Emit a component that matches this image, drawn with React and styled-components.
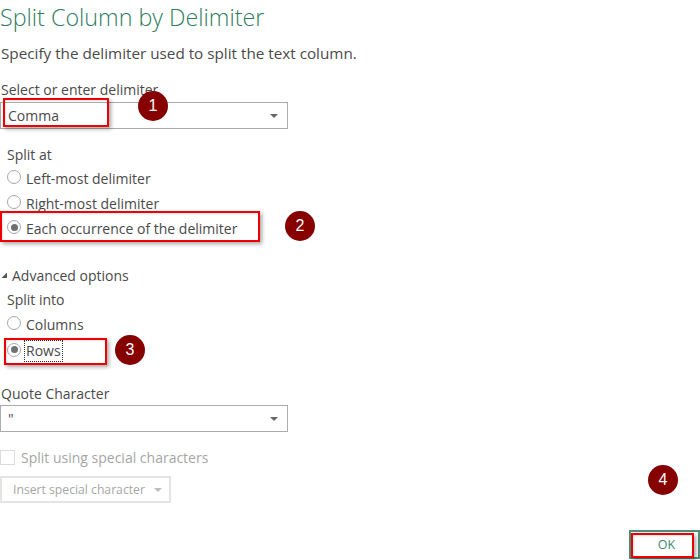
import React from "react";
import styled, { createGlobalStyle } from "styled-components";

const Global = createGlobalStyle`
  html, body { margin: 0; padding: 0; background: #fff; }
  body { width: 700px; height: 560px; overflow: hidden; }
`;

const Dialog = styled.div`
  position: relative;
  width: 700px;
  height: 560px;
  overflow: hidden;
  background: #fff;
  font-family: "Open Sans", "Noto Sans", sans-serif;
  font-size: 14px;
  color: #4a4a4a;
  display: flex;
  flex-direction: column;
`;

const Title = styled.h1`
  margin: 0;
  height: 36px;
  line-height: 35px;
  font-size: 23.3px;
  font-weight: 300;
  color: #2f7d62;
  white-space: nowrap;
`;

const Description = styled.p`
  margin: 7px 0 0;
  height: 20px;
  line-height: 20px;
  font-size: 15.25px;
  color: #4a4a4a;
  padding-left: 1px;
  white-space: nowrap;
`;

const FieldLabel = styled.div`
  height: 20px;
  line-height: 20px;
  margin-top: ${(p) => p.$top || 0}px;
  padding-left: ${(p) => p.$indent || 1}px;
  white-space: nowrap;
`;

const Select = styled.div`
  box-sizing: border-box;
  width: 288px;
  height: 27px;
  margin-top: ${(p) => p.$top || 0}px;
  border: 1px solid #ababab;
  display: flex;
  align-items: center;
  justify-content: space-between;
  padding: 0 9px 0 7px;
`;

const Caret = styled.span`
  width: 0;
  height: 0;
  border-left: 4px solid transparent;
  border-right: 4px solid transparent;
  border-top: 4px solid ${(p) => p.$color || "#666"};
  margin-top: 1px;
`;

const RadioRow = styled.label`
  display: flex;
  align-items: center;
  gap: 5px;
  height: ${(p) => p.$h || 25}px;
  padding-left: 7px;
  white-space: nowrap;
`;

const Radio = styled.span`
  box-sizing: border-box;
  width: 14px;
  height: 14px;
  margin-top: -3px;
  border-radius: 50%;
  border: 1px solid #a8a8a8;
  background: #fff;
  display: flex;
  align-items: center;
  justify-content: center;
  flex: none;
  &::after {
    content: "";
    width: 7px;
    height: 7px;
    border-radius: 50%;
    background: ${(p) => (p.$checked ? "#707070" : "transparent")};
  }
`;

const Focused = styled.span`
  outline: 1px dotted #333;
  padding: 0 1px;
  margin-left: -1px;
  height: 20px;
  line-height: 20px;
`;

const Disclosure = styled.div`
  display: flex;
  align-items: center;
  gap: 4px;
  height: 20px;
  margin-top: 24px;
`;

const Triangle = styled.svg`
  width: 8px;
  height: 8px;
  flex: none;
`;

const CheckRow = styled.div`
  display: flex;
  align-items: center;
  gap: 6px;
  height: 20px;
  margin-top: 15px;
  color: #a6a6a6;
`;

const CheckBox = styled.span`
  box-sizing: border-box;
  width: 15px;
  height: 15px;
  border: 1px solid #dcdcdc;
  flex: none;
`;

const InsertButton = styled.div`
  box-sizing: border-box;
  width: 171px;
  height: 27px;
  margin-top: 9px;
  border: 2px solid #e4e4e4;
  display: flex;
  align-items: center;
  gap: 9px;
  padding-left: 11px;
  font-size: 12.2px;
  color: #a6a6a6;
  white-space: nowrap;
`;

const Footer = styled.div`
  display: flex;
  justify-content: flex-end;
  margin-top: 27px;
`;

const OkButton = styled.button`
  box-sizing: border-box;
  width: 71px;
  height: 29px;
  border: 2px solid #4d8f78;
  background: #fff;
  padding: 0 0 0 4px;
  font: inherit;
  font-size: 12.5px;
  color: #3d8a72;
`;

const Highlight = styled.div`
  position: absolute;
  box-sizing: border-box;
  left: ${(p) => p.$x}px;
  top: ${(p) => p.$y}px;
  width: ${(p) => p.$w}px;
  height: ${(p) => p.$h}px;
  border: 2px solid #ee0000;
  box-shadow: 2px 2px 4px rgba(0, 0, 0, 0.35), inset 1px 1px 2px rgba(0, 0, 0, 0.12);
`;

const Badge = styled.div`
  position: absolute;
  left: ${(p) => p.$x - 15}px;
  top: ${(p) => p.$y - 15}px;
  width: 30px;
  height: 30px;
  border-radius: 50%;
  background: #860000;
  color: #fff;
  font-family: "Liberation Sans", sans-serif;
  font-size: 16px;
  line-height: 30px;
  text-align: center;
`;

export default function App() {
  return (
    <>
      <Global />
      <Dialog>
        <Title>Split Column by Delimiter</Title>
        <Description>Specify the delimiter used to split the text column.</Description>
        <FieldLabel $top={17}>Select or enter delimiter</FieldLabel>
        <Select $top={2}>
          Comma
          <Caret />
        </Select>
        <FieldLabel $top={16} $indent={7}>Split at</FieldLabel>
        <RadioRow $h={26}>
          <Radio />
          Left-most delimiter
        </RadioRow>
        <RadioRow>
          <Radio />
          Right-most delimiter
        </RadioRow>
        <RadioRow>
          <Radio $checked />
          Each occurrence of the delimiter
        </RadioRow>
        <Disclosure>
          <Triangle viewBox="0 0 8 8">
            <path d="M7 1.5V7H1.5z" fill="#555" />
          </Triangle>
          Advanced options
        </Disclosure>
        <FieldLabel $top={5} $indent={7}>Split into</FieldLabel>
        <RadioRow $h={29}>
          <Radio />
          Columns
        </RadioRow>
        <RadioRow $h={24}>
          <Radio $checked />
          <Focused>Rows</Focused>
        </RadioRow>
        <FieldLabel $top={21}>Quote Character</FieldLabel>
        <Select $top={1}>
          "
          <Caret />
        </Select>
        <CheckRow>
          <CheckBox />
          Split using special characters
        </CheckRow>
        <InsertButton>
          Insert special character
          <Caret $color="#bdbdbd" />
        </InsertButton>
        <Footer>
          <OkButton>OK</OkButton>
        </Footer>

        <Highlight $x={3} $y={98} $w={106} $h={29} />
        <Highlight $x={0} $y={211} $w={260} $h={31} />
        <Highlight $x={4} $y={338} $w={103} $h={27} />
        <Highlight $x={631} $y={533} $w={63} $h={25} />
        <Badge $x={153} $y={106}>1</Badge>
        <Badge $x={300} $y={226}>2</Badge>
        <Badge $x={130} $y={350}>3</Badge>
        <Badge $x={663} $y={480}>4</Badge>
      </Dialog>
    </>
  );
}
